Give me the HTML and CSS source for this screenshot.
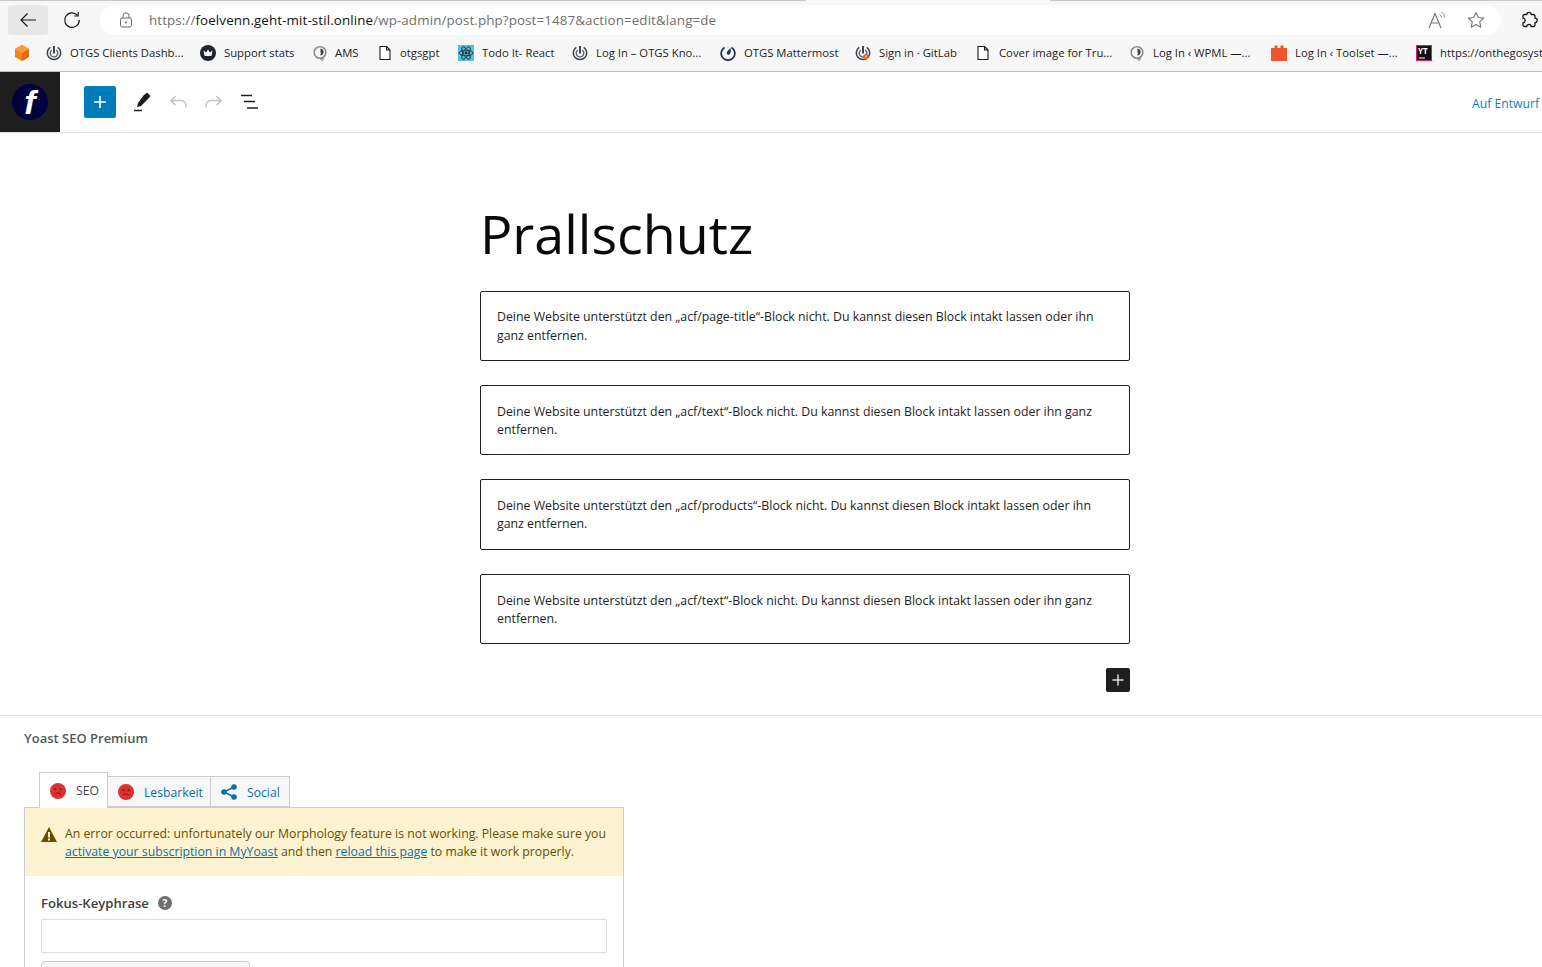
FILE: index.html
```html
<!DOCTYPE html>
<html lang="de">
<head>
<meta charset="utf-8">
<title>Prallschutz</title>
<link rel="stylesheet" href="styles.css">
</head>
<body>
<svg class="defs" width="0" height="0" aria-hidden="true">
  <defs>
    <symbol id="power" viewBox="0 0 16 16">
      <path d="M4.300 2.300A6.700 6.700 0 1 0 11.700 2.300" fill="none" stroke="#3b4048" stroke-width="1.500"/>
      <path d="M5.800 5A3.800 3.800 0 1 0 10.200 5" fill="none" stroke="#5a6578" stroke-width="1.400"/>
      <path d="M8 1v7.500" stroke="#2c3038" stroke-width="1.800"/>
    </symbol>
    <symbol id="ams" viewBox="0 0 16 16">
      <circle cx="8" cy="7.500" r="5.800" fill="none" stroke="#8a8a8a" stroke-width="1.600"/>
      <path d="M8.500 3.500a4 4 0 0 1 3 4.500c-.5 2-2.200 2.500-3.500 2.200 1-1 1-2 .5-3.200z" fill="#444"/>
      <circle cx="10" cy="14" r="1.300" fill="none" stroke="#888"/>
    </symbol>
    <symbol id="doc" viewBox="0 0 16 16">
      <path d="M3 1.500h6.500L13 5v9.500H3z M9.500 1.500V5H13" fill="#fff" stroke="#1c1c1c" stroke-width="1.100" stroke-linejoin="round"/>
    </symbol>
    <symbol id="sad" viewBox="0 0 16 16">
      <circle cx="8" cy="8" r="8" fill="#dc3232"/>
      <circle cx="5.400" cy="6.200" r="1" fill="#7d1212"/>
      <circle cx="10.600" cy="6.200" r="1" fill="#7d1212"/>
      <path d="M4.800 11.500c1.800-2 4.600-2 6.400 0" fill="none" stroke="#7d1212" stroke-width="1"/>
    </symbol>
  </defs>
</svg>

<header class="browser">
  <div class="tabline"><span class="tabline-a"></span><span class="tabline-gap"></span><span class="tabline-b"></span></div>
  <div class="toolbar">
    <button class="nav-btn nav-active" aria-label="Zurück">
      <svg width="20" height="20" viewBox="0 0 20 20"><path d="M18 10H3M9.500 3.500 3 10l6.500 6.500" fill="none" stroke="#1a1a1a" stroke-width="1.200"/></svg>
    </button>
    <button class="nav-btn nav-reload" aria-label="Neu laden">
      <svg width="18" height="18" viewBox="0 0 18 18"><path d="M14.500 4.300A7.300 7.300 0 1 0 16.300 9" fill="none" stroke="#1a1a1a" stroke-width="1.200"/><path d="M15.200 1v4h-4" fill="none" stroke="#1a1a1a" stroke-width="1.200"/></svg>
    </button>
    <div class="address">
      <svg class="lock" width="14" height="16" viewBox="0 0 14 16"><rect x="1.500" y="6" width="11" height="9" rx="1.500" fill="none" stroke="#6a6a6a"/><path d="M4 6V3.800a3 3 0 0 1 6 0V6" fill="none" stroke="#6a6a6a"/><circle cx="7" cy="10.500" r="1" fill="#6a6a6a"/></svg>
      <span class="url"><span class="url-dim">https://</span><span class="url-host">foelvenn.geht-mit-stil.online</span><span class="url-dim">/wp-admin/post.php?post=1487&amp;action=edit&amp;lang=de</span></span>
      <svg class="read" width="20" height="18" viewBox="0 0 20 18"><path d="M1 17 7 2.500 13 17M3 12h8" fill="none" stroke="#777" stroke-width="1.200"/><path d="M11.500 3.500a3.500 3.500 0 0 1 2 3M13.500 1a6 6 0 0 1 3.200 5.500" fill="none" stroke="#888"/></svg>
      <svg class="star" width="18" height="18" viewBox="0 0 18 18"><path d="m9 1.500 2.300 5 5.400.6-4 3.700 1.100 5.400L9 13.500l-4.800 2.700 1.100-5.400-4-3.700 5.400-.6z" fill="none" stroke="#777" stroke-width="1.100" stroke-linejoin="round"/></svg>
    </div>
    <svg class="puzzle" width="18" height="18" viewBox="0 0 18 18"><path d="M6.800 3.500a2.200 2.200 0 0 1 4.400 0h2.300a1.500 1.500 0 0 1 1.500 1.500v2.200a2.200 2.200 0 0 1 0 4.400v2.400a1.500 1.500 0 0 1-1.500 1.500h-2.300a2.200 2.200 0 0 0-4.400 0H4.500A1.500 1.500 0 0 1 3 14v-2.400a2.200 2.200 0 0 0 0-4.400V5a1.500 1.500 0 0 1 1.500-1.500z" fill="none" stroke="#1a1a1a" stroke-width="1.300" stroke-linejoin="round"/></svg>
  </div>
  <nav class="bookmarks">
    <span class="bm bm-solo"><svg width="16" height="16" viewBox="0 0 16 16"><path d="M8 0 15 4v8l-7 4-7-4V4z" fill="#f58220"/><path d="M8 8l7-4v8l-7 4z" fill="#e06a10"/><path d="M8 0 15 4 8 8 1 4z" fill="#fa9a40"/></svg></span>
    <span class="bm"><svg class="ico"><use href="#power"/></svg><span class="bm-t w1">OTGS Clients Dashb...</span></span>
    <span class="bm"><svg class="ico" viewBox="0 0 16 16"><circle cx="8" cy="8" r="8" fill="#20252e"/><path d="M3.500 5.500 6 7.500 8 4.500l2 3 2.500-2-1 5.500h-7z" fill="#fff"/></svg><span class="bm-t w2">Support stats</span></span>
    <span class="bm"><svg class="ico"><use href="#ams"/></svg><span class="bm-t w3">AMS</span></span>
    <span class="bm"><svg class="ico"><use href="#doc"/></svg><span class="bm-t w4">otgsgpt</span></span>
    <span class="bm"><svg class="ico" viewBox="0 0 16 16"><rect width="16" height="16" fill="#53c1de"/><g fill="none" stroke="#20232a" stroke-width=".8"><ellipse cx="8" cy="8" rx="7" ry="2.800"/><ellipse cx="8" cy="8" rx="7" ry="2.800" transform="rotate(60 8 8)"/><ellipse cx="8" cy="8" rx="7" ry="2.800" transform="rotate(120 8 8)"/></g><circle cx="8" cy="8" r="1.400" fill="#20232a"/></svg><span class="bm-t w5">Todo It- React</span></span>
    <span class="bm"><svg class="ico"><use href="#power"/></svg><span class="bm-t w6">Log In – OTGS Kno...</span></span>
    <span class="bm"><svg class="ico" viewBox="0 0 16 16"><path d="M4.500 2.500A6.800 6.800 0 1 0 11.500 2.500" fill="none" stroke="#1c3260" stroke-width="1.800"/><path d="M10.500 3c.8 3 .3 5.500-1.200 6.500-1.500.8-3-.5-2.500-2 .3-1.200 2-2.800 3.700-4.500z" fill="#1c3260"/></svg><span class="bm-t w7">OTGS Mattermost</span></span>
    <span class="bm"><svg class="ico" viewBox="0 0 16 16"><use href="#power"/><path d="M11 8l3 3-3.500 4-3.500-3z" fill="#e8602a"/><path d="M11 10l1.500 1.500-1.500 2-1.500-1.500z" fill="#fbb03b"/></svg><span class="bm-t w8">Sign in · GitLab</span></span>
    <span class="bm"><svg class="ico"><use href="#doc"/></svg><span class="bm-t w9">Cover image for Tru...</span></span>
    <span class="bm"><svg class="ico"><use href="#ams"/></svg><span class="bm-t w10">Log In ‹ WPML —...</span></span>
    <span class="bm"><svg class="ico" viewBox="0 0 16 16"><path d="M0 3h3.500V.5h3V3h3V.5h3V3H16v13H0z" fill="#ef5430"/></svg><span class="bm-t w11">Log In ‹ Toolset —...</span></span>
    <span class="bm"><svg class="ico" viewBox="0 0 16 16"><rect x=".5" y=".5" width="15" height="15" fill="#111" stroke="#e6146e"/><path d="M3 13h6" stroke="#fff"/></svg><span class="yt">YT</span><span class="bm-t">https://onthegosystems</span></span>
  </nav>
</header>

<div class="editor-bar">
  <div class="wp-logo"><span class="logo-disc">f</span></div>
  <div class="tools">
    <button class="add-btn" aria-label="Block hinzufügen"><svg width="24" height="24" viewBox="0 0 24 24"><path d="M12 6v12M6 12h12" stroke="#fff" stroke-width="1.600"/></svg></button>
    <button class="tool" aria-label="Bearbeiten"><svg width="24" height="24" viewBox="0 0 24 24"><path d="m13.500 5.500 3.500-3 3.500 3.500-3 3.500-6.500 6.500-4 1 1-4z" fill="#1e1e1e"/><path d="M4 20.500h8" stroke="#1e1e1e" stroke-width="1.500"/></svg></button>
    <button class="tool" aria-label="Rückgängig"><svg width="24" height="24" viewBox="0 0 24 24"><path d="M20 17.500v-2a5 5 0 0 0-5-5H5M9.500 6 5 10.500l4.500 4.500" fill="none" stroke="#c4c4c4" stroke-width="1.500"/></svg></button>
    <button class="tool" aria-label="Wiederholen"><svg width="24" height="24" viewBox="0 0 24 24"><path d="M4 17.500v-2a5 5 0 0 1 5-5h10M14.500 6l4.500 4.500-4.500 4.500" fill="none" stroke="#c4c4c4" stroke-width="1.500"/></svg></button>
    <button class="tool" aria-label="Übersicht"><svg width="24" height="24" viewBox="0 0 24 24"><path d="M3 5.500h11M6 11.500h11M9 18h11" stroke="#1e1e1e" stroke-width="1.500" fill="none"/></svg></button>
  </div>
  <a class="draft">Auf Entwurf</a>
</div>

<main class="canvas">
  <h1 class="post-title">Prallschutz</h1>
  <div class="missing">Deine Website unterstützt den „acf/page-title“-Block nicht. Du kannst diesen Block intakt lassen oder ihn ganz entfernen.</div>
  <div class="missing">Deine Website unterstützt den „acf/text“-Block nicht. Du kannst diesen Block intakt lassen oder ihn ganz entfernen.</div>
  <div class="missing">Deine Website unterstützt den „acf/products“-Block nicht. Du kannst diesen Block intakt lassen oder ihn ganz entfernen.</div>
  <div class="missing">Deine Website unterstützt den „acf/text“-Block nicht. Du kannst diesen Block intakt lassen oder ihn ganz entfernen.</div>
  <div class="add-row"><button class="add-dark" aria-label="Block hinzufügen"><svg width="24" height="24" viewBox="0 0 24 24"><path d="M12 6.500v11M6.500 12h11" stroke="#ddd" stroke-width="1.500"/></svg></button></div>
</main>

<section class="yoast">
  <h2 class="yoast-title">Yoast SEO Premium</h2>
  <div class="tabs">
    <div class="tab tab-on"><svg class="face"><use href="#sad"/></svg><span>SEO</span></div>
    <div class="tab tab-read"><svg class="face"><use href="#sad"/></svg><span>Lesbarkeit</span></div>
    <div class="tab tab-social"><svg class="face" viewBox="0 0 16 16"><g fill="#0a6fa5"><circle cx="13" cy="3" r="2.800"/><circle cx="13" cy="13" r="2.800"/><circle cx="3" cy="8" r="2.800"/></g><path d="M13 3 3 8l10 5" fill="none" stroke="#0a6fa5" stroke-width="1.500"/></svg><span>Social</span></div>
  </div>
  <div class="panel">
    <div class="alert">
      <svg class="warn" width="16" height="15" viewBox="0 0 16 15"><path d="M8 0 16 15H0z" fill="#674e00"/><path d="M7 5h2v5.500H7zM7 11.500h2v2H7z" fill="#fef3d0"/></svg>
      <p class="alert-text">An error occurred: unfortunately our Morphology feature is not working. Please make sure you <a>activate your subscription in MyYoast</a> and then <a>reload this page</a> to make it work properly.</p>
    </div>
    <div class="panel-body">
      <div class="field-label"><span>Fokus-Keyphrase</span><span class="help">?</span></div>
      <div class="input"></div>
      <div class="next-btn"></div>
    </div>
  </div>
</section>
</body>
</html>
```
FILE: styles.css
```css
* { box-sizing: border-box; }
html, body { margin: 0; padding: 0; height: 967px; overflow: hidden; background: #fff; }
body { font-family: "Open Sans", "Noto Sans", "Liberation Sans", sans-serif; color: #1e1e1e; }
button { border: 0; background: none; padding: 0; display: flex; align-items: center; justify-content: center; }
.defs { position: absolute; }

.browser { background: #f7f7f7; height: 72px; border-bottom: 1px solid #bdbdbd; }
.tabline { display: flex; height: 1px; }
.tabline-a { width: 806px; background: #c8c8c8; }
.tabline-gap { width: 244px; }
.tabline-b { flex: 1; background: #c8c8c8; }

.toolbar { display: flex; align-items: center; height: 30px; margin-top: 4px; padding-left: 8px; }
.nav-btn { width: 40px; height: 30px; border-radius: 3px; }
.nav-active { background: #e7e7e7; }
.nav-reload { margin-left: 2px; margin-right: 6px; width: 44px; }
.address { width: 1401px; height: 30px; border-radius: 15px; background: #fff; display: flex; align-items: center; padding-left: 19px; padding-right: 16px; }
.lock { margin-right: 16px; flex: none; }
.url { font-size: 13.400px; flex: 1; white-space: nowrap; letter-spacing: .1px; }
.url-dim { color: #6f6f6f; }
.url-host { color: #111; }
.read { margin-right: 19px; }
.puzzle { margin-left: 19px; flex: none; }

.bookmarks { display: flex; align-items: center; height: 35px; padding-left: 14px; gap: 16px; white-space: nowrap; overflow: hidden; font-size: 11.300px; color: #1c1c1c; }
.bm { display: flex; align-items: center; gap: 8px; flex: none; position: relative; }
.ico { width: 16px; height: 16px; flex: none; }
.bm-t { display: block; overflow: hidden; }
.w1 { width: 114px; }
.w2 { width: 72px; }
.w3 { width: 26px; margin-left: -1px; }
.w4 { width: 42px; margin-left: -1px; }
.w5 { width: 74px; }
.w6 { width: 108px; }
.w7 { width: 95px; }
.w8 { width: 80px; }
.w9 { width: 114px; }
.w10 { width: 102px; }
.w11 { width: 105px; }
.yt { position: absolute; left: 2px; top: 0; font-size: 8px; line-height: 11px; font-weight: 700; color: #fff; }

.editor-bar { height: 61px; border-bottom: 1px solid #e0e0e0; display: flex; align-items: center; }
.wp-logo { width: 60px; height: 60px; background: #1e1e1e; display: flex; align-items: center; justify-content: center; }
.logo-disc { width: 36px; height: 36px; border-radius: 50%; background: #03003e; color: #fff; font: italic 700 34px/36px "Liberation Sans", sans-serif; text-align: center; }
.tools { display: flex; align-items: center; gap: 4px; margin-left: 24px; flex: 1; }
.add-btn { width: 32px; height: 32px; background: #007cba; border-radius: 2px; margin-right: 6px; }
.tool { width: 32px; height: 32px; }
.draft { font-size: 12.200px; color: #0a7fc4; margin-right: 3px; margin-top: 2px; }

.canvas { width: 650px; margin-left: 480px; height: 582px; padding-top: 67px; }
.post-title { margin: 0 0 24.600px; font-size: 53.800px; line-height: 66px; font-weight: 400; color: #0a0a0a; }
.missing { border: 1px solid #1e1e1e; border-radius: 2px; background: #fff; padding: 16.800px 16px 0; margin-bottom: 24px; font-size: 12.330px; line-height: 18.300px; height: 70.400px; color: #1e1e1e; }
.add-row { display: flex; justify-content: flex-end; }
.add-dark { width: 24px; height: 24px; background: #1e1e1e; border-radius: 2px; }

.yoast { border-top: 1px solid #e0e0e0; padding: 0 0 0 24px; }
.yoast-title { margin: 0; height: 56px; padding-top: 13px; font-size: 13px; line-height: 18px; font-weight: 600; color: #50575e; }
.tabs { display: flex; align-items: flex-end; padding-left: 15px; height: 35px; position: relative; z-index: 1; }
.tab { height: 31px; display: flex; align-items: center; gap: 10px; border: 1px solid #ccc; border-left: 0; background: #f7f7f7; color: #0a6fa5; font-size: 12.200px; padding-top: 1px; }
.tab-on { height: 36px; width: 69px; background: #fff; border-left: 1px solid #ccc; border-bottom: 0; color: #444; padding: 0 0 0 10px; margin-bottom: -1px; }
.tab-read { width: 103px; padding-left: 10px; }
.tab-social { width: 79px; padding-left: 10px; }
.face { width: 16px; height: 16px; flex: none; }

.panel { width: 600px; height: 200px; border: 1px solid #ccc; border-width: 1px 1px 0; }
.alert { background: #fef3d0; height: 68px; display: flex; padding: 17px 12px 0 16px; gap: 8px; color: #674e00; }
.warn { margin-top: 2px; flex: none; }
.alert-text { margin: 0; font-size: 12.280px; line-height: 18.300px; }
.alert-text a { color: #0a6fa5; text-decoration: underline; }
.panel-body { padding: 17px 16px 0; }
.field-label { display: flex; align-items: center; gap: 9px; height: 20px; font-size: 13.100px; font-weight: 600; color: #404040; }
.help { width: 14px; height: 14px; border-radius: 50%; background: #707070; color: #fff; font-size: 10px; line-height: 14px; text-align: center; font-weight: 700; }
.input { height: 34px; margin-top: 6px; border: 1px solid #ddd; background: #fff; }
.next-btn { width: 209px; height: 20px; margin-top: 8px; border: 1px solid #ccc; border-radius: 4px; background: #f7f7f7; }
```
